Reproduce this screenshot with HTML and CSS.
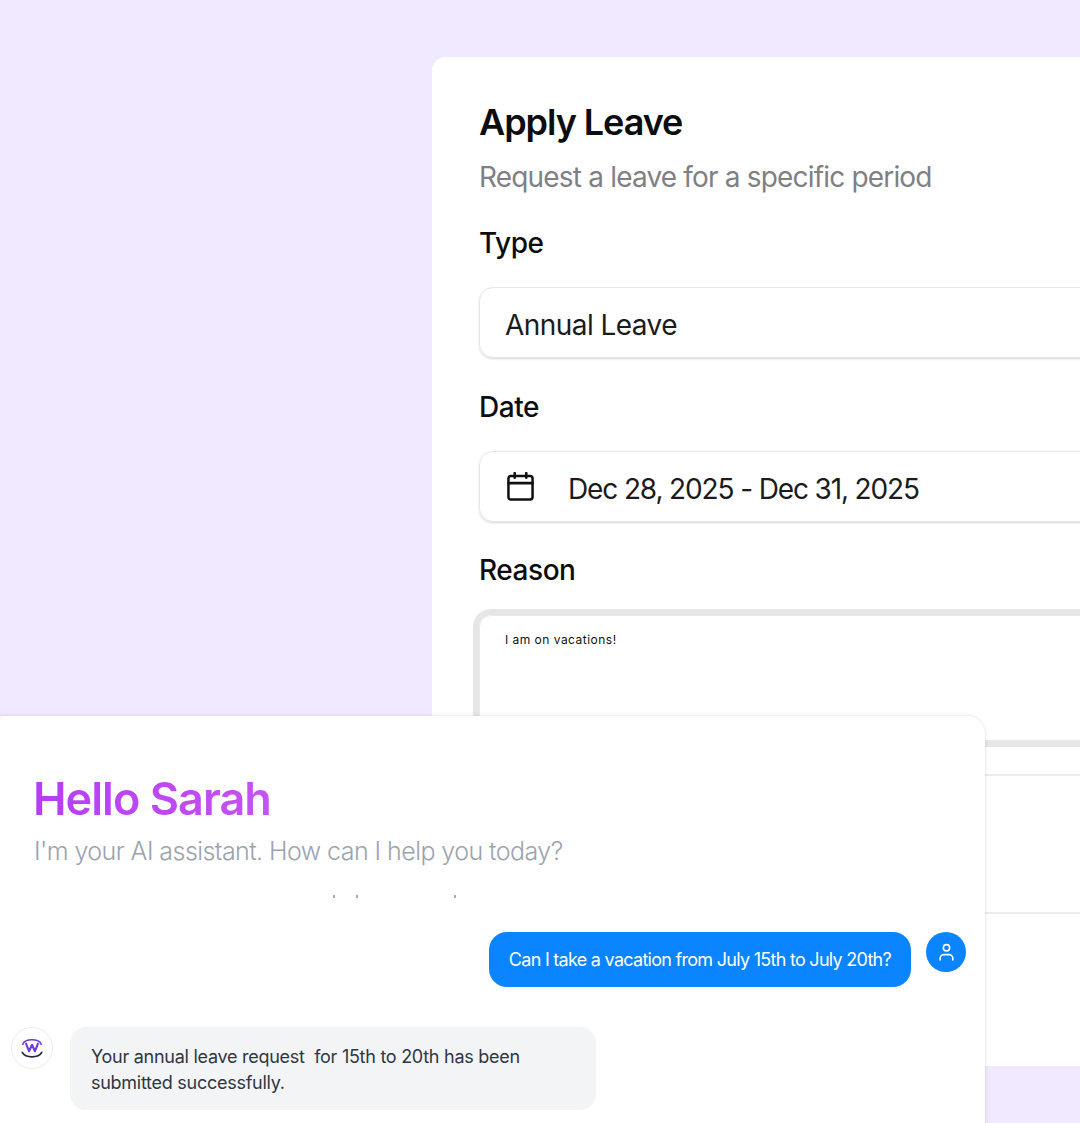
FILE: index.html
```html
<!DOCTYPE html>
<html lang="en">
<head>
<meta charset="utf-8">
<title>Apply Leave</title>
<link rel="stylesheet" href="styles.css">
</head>
<body>
<main class="canvas">
  <section class="form-card">
    <h1 class="form-title">Apply Leave</h1>
    <p class="form-sub">Request a leave for a specific period</p>
    <label class="label label-type">Type</label>
    <div class="field"><span>Annual Leave</span></div>
    <label class="label">Date</label>
    <div class="field field-date">
      <svg class="cal" viewBox="0 0 28 30" fill="none" stroke="#111" stroke-width="2.6" stroke-linecap="round" stroke-linejoin="round"><rect x="1.5" y="4" width="25" height="24.5" rx="2.5"/><path d="M1.5 11.5h25M8 1v5M20 1v5"/></svg>
      <span>Dec 28, 2025 - Dec 31, 2025</span>
    </div>
    <label class="label label-reason">Reason</label>
    <div class="textarea">I am on vacations!</div>
    <div class="rest rest-a"></div>
    <div class="rest rest-b"></div>
  </section>

  <section class="chat-card">
    <h2 class="hello">Hello Sarah</h2>
    <p class="hello-sub">I'm your AI assistant. How can I help you today?</p>
    <div class="specks"><i></i><i></i><i></i></div>
    <div class="msg msg-user">
      <div class="bubble-user">Can I take a vacation from July 15th to July 20th?</div>
      <div class="avatar-user">
        <svg viewBox="0 0 16 18" width="17" height="19" fill="none" stroke="#fff" stroke-width="1.5" stroke-linecap="round"><circle cx="8" cy="4.5" r="3"/><path d="M2 16v-1.5a3.5 3.5 0 0 1 3.5-3.5h5a3.5 3.5 0 0 1 3.5 3.5V16"/></svg>
      </div>
    </div>
    <div class="msg msg-bot">
      <div class="avatar-bot">
        <svg viewBox="0 0 24 24" width="26" height="26" fill="none" stroke-linecap="round" stroke-linejoin="round"><path d="M3.5 8.5C5.5 3 18.5 3 20.5 8.5" stroke="#6d3bdc" stroke-width="1.5"/><path d="M6.5 8l2.8 7 2.7-6 2.7 6 2.8-7" stroke="#6d3bdc" stroke-width="1.9"/><path d="M3 16C6 21.5 18 21.5 21 16" stroke="#2b2740" stroke-width="1.6"/></svg>
      </div>
      <div class="bubble-bot">Your annual leave request&nbsp; for 15th to 20th has been submitted successfully.</div>
    </div>
  </section>
</main>
</body>
</html>
```

FILE: styles.css
```css
* { box-sizing: border-box; }
html, body { margin: 0; height: 100%; }
body {
  background: #f1e9ff;
  font-family: "Inter", "Liberation Sans", sans-serif;
  overflow: hidden;
}
.canvas { position: relative; width: 1080px; height: 1123px; overflow: hidden; }

.form-card {
  position: absolute;
  left: 432px;
  top: 57px;
  width: 720px;
  height: 1009px;
  padding: 45px 0 0 47px;
  background: #fff;
  border-radius: 14px;
  color: #0d0d0f;
}
.form-title {
  margin: 0;
  font-size: 36px;
  line-height: 40px;
  font-weight: 600;
  letter-spacing: -1.05px;
}
.form-sub {
  margin: 18px 0 0;
  font-size: 28px;
  line-height: 34px;
  font-weight: 400;
  letter-spacing: -0.82px;
  color: #808084;
}
.label {
  display: block;
  margin: 32px 0 27px;
  font-size: 28px;
  line-height: 34px;
  font-weight: 500;
  letter-spacing: -0.45px;
}
.label-reason { margin: 31px 0 28px; }
.field {
  display: flex;
  align-items: center;
  gap: 34px;
  height: 71px;
  padding: 4px 0 0 25px;
  border: 1px solid #e6e6e6;
  border-radius: 14px;
  box-shadow: 0 1px 2px rgba(0,0,0,.16);
  font-size: 28px;
  letter-spacing: -0.55px;
  color: #1b1b1d;
}
.field-date { letter-spacing: -1.13px; }
.cal { width: 27px; height: 29px; flex: none; margin: -4px 0 0 2px; }
.textarea {
  margin-top: 28px;
  height: 126px;
  padding: 17px 25px;
  border: 1px solid #e9e9e9;
  border-radius: 12px;
  box-shadow: 0 0 0 6px #e6e6e6;
  clip-path: inset(-6px -10px -6px -6px round 16px);
  font-size: 12px;
  line-height: 14px;
  letter-spacing: 0.48px;
  color: #111;
}
.rest { position: absolute; left: 0; right: 0; height: 2px; background: #ececec; }
.rest-a { top: 717px; }
.rest-b { top: 855px; }

.chat-card {
  position: absolute;
  left: -14px;
  top: 716px;
  width: 999px;
  height: 440px;
  padding: 56px 0 0 48px;
  background: #fff;
  border-radius: 18px;
  box-shadow: 0 0 3px 1px rgba(90,70,130,.13);
}
.hello {
  margin: 0 0 0 -1px;
  width: fit-content;
  font-size: 45px;
  line-height: 54px;
  font-weight: 600;
  letter-spacing: -0.95px;
  background: linear-gradient(90deg, #b73cf6, #c552f3);
  -webkit-background-clip: text;
  background-clip: text;
  color: transparent;
}
.hello-sub {
  margin: 9px 0 0;
  font-size: 25px;
  line-height: 32px;
  font-weight: 300;
  letter-spacing: -0.56px;
  color: #9ba3ae;
}
.specks { position: relative; height: 4px; margin-top: 28px; }
.specks i { position: absolute; top: 0; width: 2px; height: 3px; background: #aaa; }
.specks i:nth-child(1) { left: 299px; }
.specks i:nth-child(2) { left: 322px; }
.specks i:nth-child(3) { left: 420px; }

.msg { display: flex; }
.msg-user {
  justify-content: flex-end;
  gap: 15px;
  margin-top: 33px;
  padding-right: 19px;
  align-items: flex-start;
}
.bubble-user {
  height: 55px;
  padding: 0 20px;
  display: flex;
  align-items: center;
  background: #0a84ff;
  border-radius: 18px;
  color: #fff;
  font-size: 18px;
  font-weight: 400;
  letter-spacing: -0.72px;
}
.avatar-user {
  width: 40px;
  height: 40px;
  border-radius: 50%;
  background: #0a84ff;
  display: flex;
  align-items: center;
  justify-content: center;
}
.msg-bot {
  margin: 40px 0 0 -23px;
  gap: 17px;
  align-items: flex-start;
}
.avatar-bot {
  width: 42px;
  height: 42px;
  border-radius: 50%;
  background: #fff;
  border: 1px solid #ececf1;
  display: flex;
  align-items: center;
  justify-content: center;
}
.bubble-bot {
  width: 526px;
  height: 83px;
  padding: 17px 21px;
  background: #f3f4f6;
  border-radius: 16px;
  font-size: 18px;
  line-height: 26px;
  letter-spacing: -0.27px;
  color: #2f3742;
}
```
